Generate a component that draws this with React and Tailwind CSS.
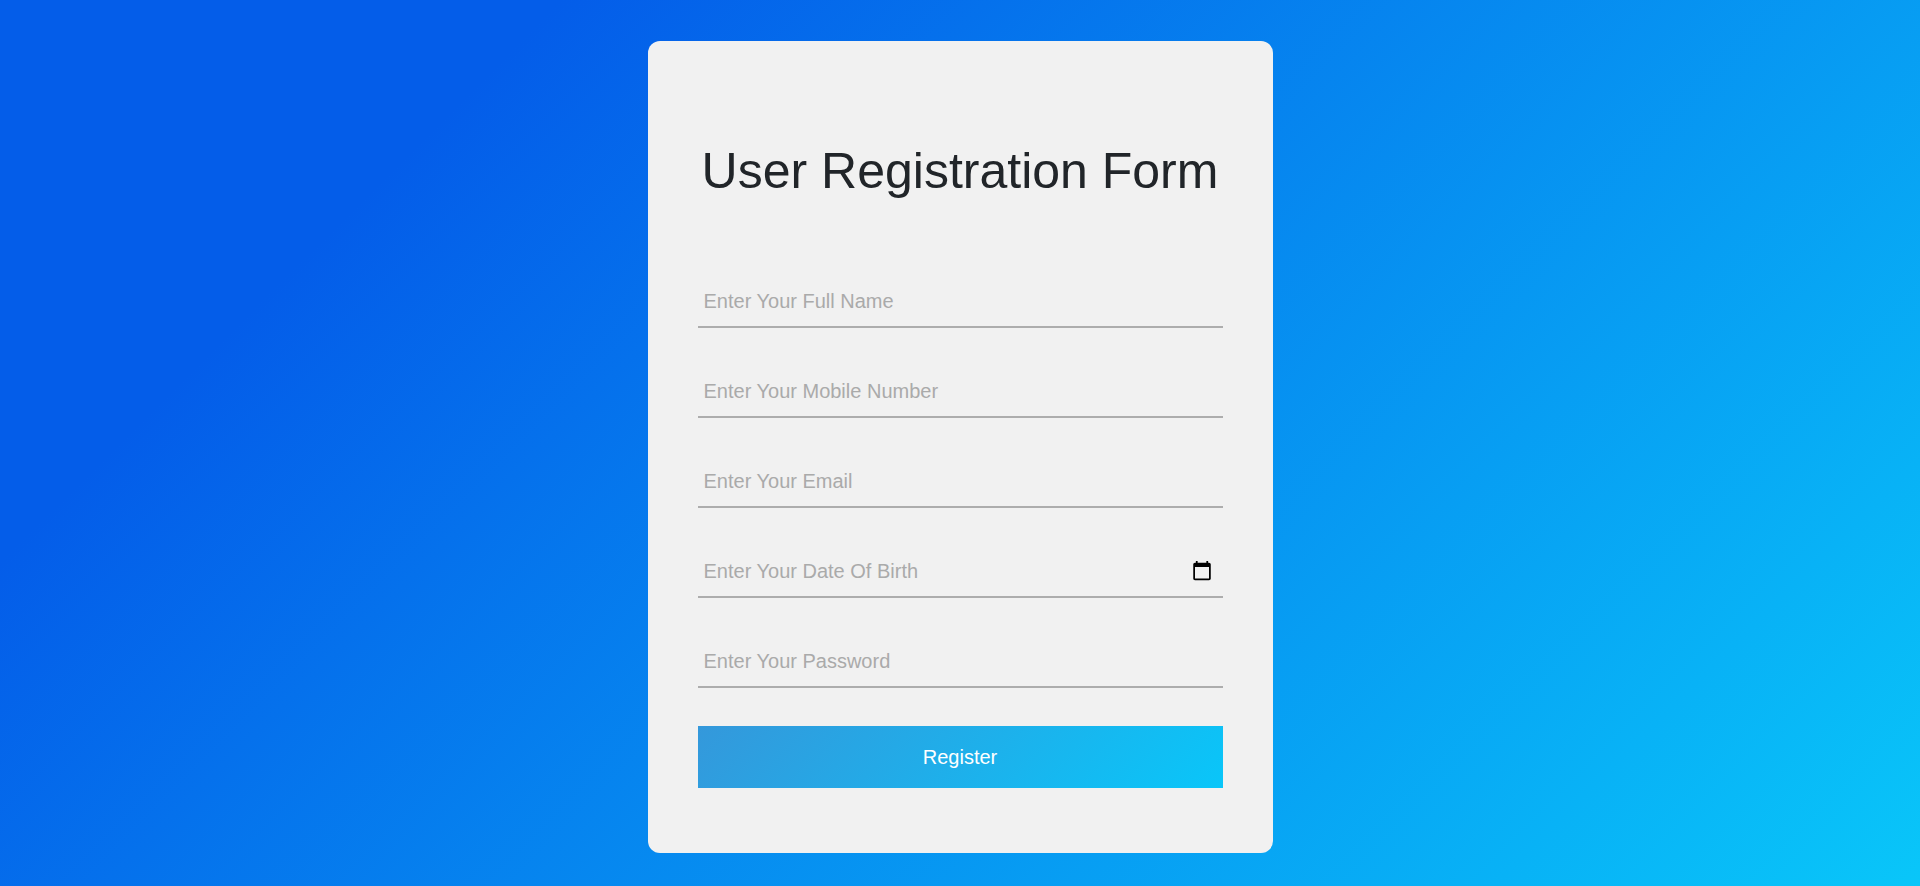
const fields = [
  { id: 'name', type: 'text', label: 'Enter Your Full Name' },
  { id: 'mobile', type: 'tel', label: 'Enter Your Mobile Number' },
  { id: 'email', type: 'email', label: 'Enter Your Email' },
  { id: 'dob', type: 'date', label: 'Enter Your Date Of Birth' },
  { id: 'password', type: 'password', label: 'Enter Your Password' },
];

const row = 'w-full border-b-2 border-[#adadad] px-1.5 pt-3 pb-[13px] text-[20px] leading-6';

function DateField({ id, label }) {
  return (
    <div className={`${row} flex items-center text-[#aaaaaa]`}>
      <label htmlFor={id} className="grow">
        {label}
      </label>
      <input
        id={id}
        type="date"
        className="h-6 bg-transparent pr-0.5 text-[22px] text-black outline-none [&::-webkit-datetime-edit]:hidden"
      />
    </div>
  );
}

function TextField({ id, type, label }) {
  return (
    <input
      id={id}
      type={type}
      aria-label={label}
      placeholder={label}
      className={`${row} block bg-transparent text-[#212529] outline-none placeholder:text-[#aaaaaa]`}
    />
  );
}

export default function App() {
  return (
    <main className="flex min-h-screen items-start justify-center bg-linear-135/srgb from-[#045de9] from-20% to-[#09c6f9] px-5 pt-[41px] pb-8 font-['Liberation_Sans',Arial,sans-serif]">
      <form
        onSubmit={(e) => e.preventDefault()}
        className="w-full max-w-[625px] rounded-xl bg-[#f1f1f1] px-[50px] pt-[100px] pb-[65px]"
      >
        <h1 className="text-center text-[50px] leading-[60px] text-[#212529]">
          User Registration Form
        </h1>
        <div className="mt-[76px] flex flex-col gap-[39px]">
          {fields.map((f) =>
            f.type === 'date' ? <DateField key={f.id} {...f} /> : <TextField key={f.id} {...f} />
          )}
        </div>
        <button
          type="submit"
          className="mt-[38px] block h-[62px] w-full bg-linear-135/srgb from-[#3498db] to-[#09c6f9] text-[20px] text-white"
        >
          Register
        </button>
      </form>
    </main>
  );
}
